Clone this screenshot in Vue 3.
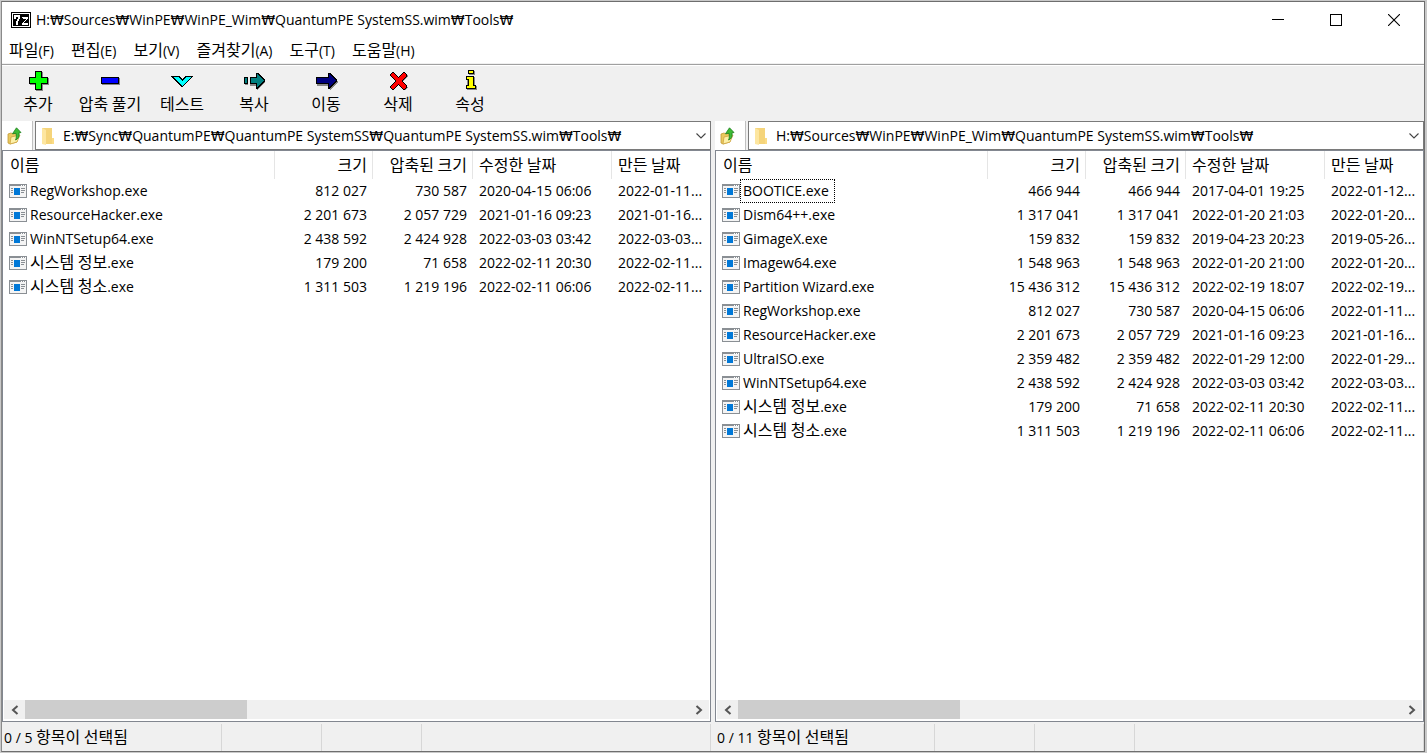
<script setup>
import { h } from 'vue'

const menus = ['파일(F)', '편집(E)', '보기(V)', '즐겨찾기(A)', '도구(T)', '도움말(H)']

const tools = [
  { id: 'add', label: '추가' },
  { id: 'extract', label: '압축 풀기' },
  { id: 'test', label: '테스트' },
  { id: 'copy', label: '복사' },
  { id: 'move', label: '이동' },
  { id: 'delete', label: '삭제' },
  { id: 'info', label: '속성' },
]

const columns = ['이름', '크기', '압축된 크기', '수정한 날짜', '만든 날짜']

const reg = ['RegWorkshop.exe', '812 027', '730 587', '2020-04-15 06:06', '2022-01-11...']
const hacker = ['ResourceHacker.exe', '2 201 673', '2 057 729', '2021-01-16 09:23', '2021-01-16...']
const setup = ['WinNTSetup64.exe', '2 438 592', '2 424 928', '2022-03-03 03:42', '2022-03-03...']
const sysInfo = ['시스템 정보.exe', '179 200', '71 658', '2022-02-11 20:30', '2022-02-11...']
const sysClean = ['시스템 청소.exe', '1 311 503', '1 219 196', '2022-02-11 06:06', '2022-02-11...']

const panels = [
  {
    id: 'left',
    path: 'E:₩Sync₩QuantumPE₩QuantumPE SystemSS₩QuantumPE SystemSS.wim₩Tools₩',
    status: '0 / 5 항목이 선택됨',
    rows: [reg, hacker, setup, sysInfo, sysClean],
  },
  {
    id: 'right',
    path: 'H:₩Sources₩WinPE₩WinPE_Wim₩QuantumPE SystemSS.wim₩Tools₩',
    status: '0 / 11 항목이 선택됨',
    focused: 0,
    rows: [
      ['BOOTICE.exe', '466 944', '466 944', '2017-04-01 19:25', '2022-01-12...'],
      ['Dism64++.exe', '1 317 041', '1 317 041', '2022-01-20 21:03', '2022-01-20...'],
      ['GimageX.exe', '159 832', '159 832', '2019-04-23 20:23', '2019-05-26...'],
      ['Imagew64.exe', '1 548 963', '1 548 963', '2022-01-20 21:00', '2022-01-20...'],
      ['Partition Wizard.exe', '15 436 312', '15 436 312', '2022-02-19 18:07', '2022-02-19...'],
      reg,
      hacker,
      ['UltraISO.exe', '2 359 482', '2 359 482', '2022-01-29 12:00', '2022-01-29...'],
      setup,
      sysInfo,
      sysClean,
    ],
  },
]

// Hangul runs are set one step larger than the Latin text beside them.
const Mixed = (props) =>
  h(
    'span',
    props.text
      .split(/([가-힣]+(?: [가-힣]+)*)/)
      .filter(Boolean)
      .map((part) => (/[가-힣]/.test(part) ? h('span', { class: 'ko' }, part) : part)),
  )
Mixed.props = ['text']
</script>

<template>
  <div class="desktop">
    <div class="window">
      <header class="titlebar">
        <svg class="app-icon" width="20" height="16" viewBox="0 0 20 16" shape-rendering="crispEdges" aria-hidden="true">
          <rect width="20" height="16" fill="#000" />
          <rect x="1" y="1" width="18" height="14" fill="#fff" />
          <rect x="2" y="2" width="16" height="12" fill="#000" />
          <path d="M3 3h6v4h-1v2h-1v4h-2v-4h1v-2h1v-2h-2v2h-2zM11 5h6v2h-1v1h-1v1h-1v1h-1v1h4v2h-6v-2h1v-1h1v-1h1v-1h1v-1h-3z" fill="#fff" />
        </svg>
        <h1 class="title">H:₩Sources₩WinPE₩WinPE_Wim₩QuantumPE SystemSS.wim₩Tools₩</h1>
        <div class="captions">
          <button type="button" aria-label="최소화">
            <svg width="12" height="12" viewBox="0 0 12 12" shape-rendering="crispEdges"><path d="M0 5h12v1H0z" /></svg>
          </button>
          <button type="button" aria-label="최대화">
            <svg width="12" height="12" viewBox="0 0 12 12" shape-rendering="crispEdges"><path d="M0 0h12v12H0zM1 1v10h10V1z" fill-rule="evenodd" /></svg>
          </button>
          <button type="button" aria-label="닫기">
            <svg width="12" height="12" viewBox="0 0 12 12"><path d="M0 0L12 12M12 0L0 12" stroke="#000" stroke-width="1.1" /></svg>
          </button>
        </div>
      </header>

      <nav class="menubar">
        <button v-for="m in menus" :key="m" type="button"><Mixed :text="m" /></button>
      </nav>

      <div class="toolbar">
        <button v-for="t in tools" :key="t.id" type="button">
          <svg width="24" height="24" viewBox="0 0 24 24" shape-rendering="crispEdges" aria-hidden="true">
            <g v-if="t.id === 'add'">
              <path d="M10 4h7v6h6v7h-6v6h-7v-6h-6v-7h6z" fill="#888" />
              <path d="M9 3h7v6h6v7h-6v6h-7v-6h-6v-7h6z" />
              <path d="M10 4h5v6h6v5h-6v6h-5v-6h-6v-5h6z" fill="#0f0" />
            </g>
            <g v-else-if="t.id === 'extract'">
              <path d="M4 10h18v7h-18z" fill="#888" />
              <path d="M3 9h18v7h-18z" />
              <path d="M4 10h16v5h-16z" fill="#00f" />
            </g>
            <g v-else-if="t.id === 'test'">
              <path d="M1 8h8l3 3l4-3h7l-11 12z" />
              <path d="M3 9h5l4 4l4-4h5l-9 9z" fill="#0ff" />
            </g>
            <g v-else-if="t.id === 'copy'">
              <path d="M3 10h3v7h-3zM8 10h7v-4l9 8l-9 8v-4h-7z" fill="#888" />
              <path d="M2 9h4v7h-4zM8 9h6v-4h2l7 7v1l-7 8h-2v-5h-6z" />
              <path d="M3 10h2v5h-2zM9 10h6v-4l7 7l-7 6v-4h-6z" fill="#008080" />
            </g>
            <g v-else-if="t.id === 'move'">
              <path d="M3 10h13v-4l8 8l-8 8v-4h-13z" fill="#888" />
              <path d="M2 9h12v-4h2l7 7v1l-7 8h-2v-5h-12z" />
              <path d="M3 10h12v-4l7 7l-7 6v-4h-12z" fill="#000080" />
            </g>
            <g v-else-if="t.id === 'delete'">
              <path d="M7 5l6 6l6-6l3 3l-6 6l6 6l-3 2l-6-5l-6 5l-2-3l6-6l-6-6z" fill="#888" />
              <path d="M6 4h1l5 5l6-5h1l2 3v1l-5 5l5 5v1l-2 3h-1l-6-5l-5 5h-1l-2-3v-1l5-5l-5-5v-1z" />
              <path d="M6 5h1l5 5l6-5l2 2v1l-5 5l5 5v1l-2 2l-6-5l-5 5h-1l-1-2v-1l5-5l-5-5v-1z" fill="#f00" />
            </g>
            <g v-else>
              <path d="M11 3h6v4h-6zM9 9h8v9h2v4h-10z" fill="#888" />
              <path d="M10 2h6v4h-6zM8 8h8v9h2v4h-10v-4h2v-5h-2z" />
              <path d="M11 3h4v2h-4zM9 9h6v9h2v2h-8v-2h2v-7h-2z" fill="#ff0" />
            </g>
          </svg>
          <Mixed :text="t.label" />
        </button>
      </div>

      <main class="panels">
        <section v-for="p in panels" :key="p.id" class="panel">
          <div class="address">
            <button class="up" type="button" aria-label="상위 폴더">
              <svg width="16" height="18" viewBox="0 0 16 18" aria-hidden="true">
                <path d="M1 7l3-1l2 1l4-1v9l-7 2l-2-1z" fill="#e9c95f" stroke="#c39a35" stroke-width=".8" />
                <path d="M4 10l9-2l-3 7l-7 2z" fill="#fdf0a8" stroke="#cfa540" stroke-width=".8" />
                <path d="M9.500.8l4.500 4.700l-2 .3c.5 4-.5 6-3.500 7.200c1-2 1-4 .5-6.700l-3.500.4z" fill="#3dbb35" stroke="#1c7d1c" stroke-width=".8" />
              </svg>
            </button>
            <div class="combo">
              <svg width="14" height="18" viewBox="0 0 14 18" aria-hidden="true">
                <path d="M1 1h10v13h2v3h-12z" fill="#f5d47a" />
                <path d="M1 1l4 2v15l-4-1z" fill="#fde6a0" />
                <path d="M11 11h2v6h-2z" fill="#fbdc86" />
              </svg>
              <input type="text" :value="p.path" :aria-label="'경로 ' + p.id" spellcheck="false" />
              <button type="button" aria-label="경로 목록">
                <svg width="10" height="6" viewBox="0 0 10 6"><path d="M.5.5L5 5L9.500.5" fill="none" stroke="#444" stroke-width="1.1" /></svg>
              </button>
            </div>
          </div>

          <div class="list">
            <div class="scroll">
              <table>
                <colgroup>
                  <col class="c-name" /><col class="c-size" /><col class="c-packed" /><col class="c-date" /><col />
                </colgroup>
                <thead>
                  <tr><th v-for="c in columns" :key="c" scope="col"><Mixed :text="c" /></th></tr>
                </thead>
                <tbody>
                  <tr v-for="(row, r) in p.rows" :key="row[0]">
                    <td v-for="(cell, i) in row" :key="i">
                      <div v-if="i === 0" class="file">
                        <svg width="18" height="14" viewBox="0 0 18 14" shape-rendering="crispEdges" aria-hidden="true">
                          <path d="M0 0h18v14h-18z" fill="#8a8f94" />
                          <path d="M1 2h16v11h-16z" fill="#f4f4f4" />
                          <path d="M12 1h1v1h-1zM14 1h1v1h-1zM16 1h1v1h-1z" fill="#fff" />
                          <path d="M2 4h2v1h-2zM2 6h2v1h-2zM2 8h2v1h-2zM12 4h4v1h-4zM12 6h4v1h-4zM12 8h3v1h-3z" fill="#8a8f94" />
                          <path d="M5 4h6v7h-6z" fill="#0078d7" />
                        </svg>
                        <span class="fname" :class="{ focused: r === p.focused }"><Mixed :text="cell" /></span>
                      </div>
                      <template v-else>{{ cell }}</template>
                    </td>
                  </tr>
                </tbody>
              </table>
            </div>
            <div class="hbar">
              <button type="button" aria-label="왼쪽으로">
                <svg width="8" height="10" viewBox="0 0 8 10"><path d="M6.500 1L2 5l4.500 4" fill="none" stroke="#555" stroke-width="2" /></svg>
              </button>
              <div class="track"><div class="thumb"></div></div>
              <button type="button" aria-label="오른쪽으로">
                <svg width="8" height="10" viewBox="0 0 8 10"><path d="M1.500 1L6 5l-4.500 4" fill="none" stroke="#555" stroke-width="2" /></svg>
              </button>
            </div>
          </div>

          <footer class="status">
            <span class="s-main"><Mixed :text="p.status" /></span>
            <span class="s-cell"></span>
            <span class="s-cell"></span>
            <span class="s-rest"></span>
          </footer>
        </section>
      </main>
    </div>
  </div>
</template>

<style>
body {
  background: #c9c9c9;
}
</style>

<style scoped>
.desktop {
  box-sizing: border-box;
  display: flex;
  min-height: 100vh;
  padding: 1px 2px 1px 1px;
  font-family: 'Open Sans', 'DejaVu Sans', 'Noto Sans CJK KR', sans-serif;
  font-size: 14px;
  line-height: 24px;
  color: #000;
}
.window {
  flex: 1;
  min-width: 0;
  display: flex;
  flex-direction: column;
  background: #f0f0f0;
  border: 1px solid #6e6e6e;
  border-left-color: #8a8a8a;
}
button {
  padding: 0;
  border: 0;
  background: none;
  font: inherit;
  color: inherit;
}
svg {
  flex: none;
  display: block;
}
.desktop :deep(.ko) {
  font-family: 'Noto Sans CJK KR', sans-serif;
  font-size: 16px;
  line-height: 1px;
}
.titlebar {
  display: flex;
  align-items: center;
  height: 36px;
  padding-left: 9px;
  background: #fff;
}
.title {
  flex: 1;
  margin: 0 0 0 5px;
  font-size: 14px;
  font-weight: 400;
  white-space: nowrap;
}
.captions {
  display: flex;
  height: 100%;
  padding-right: 1px;
}
.captions button {
  width: 58px;
  display: grid;
  place-items: center;
}
.menubar {
  display: flex;
  gap: 17px;
  height: 24px;
  padding: 1px 7px 0;
  background: #fff;
}
.toolbar {
  display: flex;
  height: 56px;
  margin-top: 1px;
  border-top: 1px solid #a0a0a0;
  box-shadow: inset 0 1px #fff;
}
.toolbar button {
  width: 72px;
  display: flex;
  flex-direction: column;
  align-items: center;
  padding-top: 3px;
  line-height: 26px;
  white-space: nowrap;
}
.panels {
  flex: 1;
  display: grid;
  grid-template-columns: 1fr 1fr;
  gap: 4px;
}
.panel {
  min-width: 0;
  display: flex;
  flex-direction: column;
}
.address {
  display: flex;
  gap: 2px;
  height: 29px;
}
.up {
  width: 31px;
  padding-left: 5px;
  background: #fff;
  border-right: 1px solid #c0c0c0;
}
.combo {
  flex: 1;
  min-width: 0;
  display: flex;
  align-items: center;
  padding-left: 5px;
  background: #fff;
  border: 1px solid #7a7a7a;
}
.combo input {
  flex: 1;
  min-width: 0;
  padding: 0;
  margin-left: 8px;
  border: 0;
  outline: 0;
  font: inherit;
  color: inherit;
  background: none;
}
.combo button {
  width: 18px;
  height: 24px;
  display: grid;
  place-items: center;
}
.list {
  flex: 1;
  display: flex;
  flex-direction: column;
  background: #fff;
  border: 1px solid #828790;
}
.scroll {
  flex: 1;
  overflow: hidden;
}
table {
  width: 100%;
  table-layout: fixed;
  border-collapse: separate;
  border-spacing: 0;
}
.c-name { width: 272px; }
.c-size { width: 98px; }
.c-packed { width: 100px; }
.c-date { width: 139px; }
th,
td {
  box-sizing: border-box;
  height: 24px;
  padding: 0 6px;
  font-weight: 400;
  text-align: left;
  white-space: nowrap;
}
td:last-child {
  padding-right: 0;
}
th {
  height: 28px;
  padding-top: 2px;
  padding-right: 5px;
  border-right: 1px solid #e5e5e5;
}
th:first-child {
  padding-left: 7px;
}
th:last-child {
  border-right: 0;
}
th:nth-child(2),
th:nth-child(3),
td:nth-child(2),
td:nth-child(3) {
  text-align: right;
}
.file {
  display: flex;
  align-items: center;
}
.fname {
  padding: 0 5px 0 2px;
  border: 1px dotted transparent;
  line-height: 22px;
}
.fname.focused {
  border-color: #000;
}
.hbar {
  display: flex;
  height: 19px;
  margin: 0 1px 2px;
  background: #f0f0f0;
}
.hbar button {
  width: 21px;
  display: grid;
  place-items: center;
}
.track {
  flex: 1;
}
.thumb {
  width: 33.5%;
  height: 100%;
  background: #cdcdcd;
}
.status {
  display: flex;
  height: 29px;
  padding-top: 2px;
  box-sizing: border-box;
}
.status span[class^='s-'] {
  box-sizing: border-box;
  border-right: 1px solid #d7d7d7;
}
.s-main {
  width: 220px;
  padding-top: 2px;
  padding-left: 2px;
}
.s-cell {
  width: 100px;
}
.s-rest {
  flex: 1;
}
</style>
